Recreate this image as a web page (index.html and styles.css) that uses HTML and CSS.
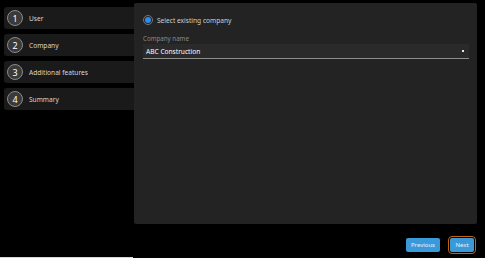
FILE: index.html
```html
<!DOCTYPE html>
<html lang="en">
<head>
    <meta charset="UTF-8">
    <meta name="viewport" content="width=device-width, initial-scale=1.0">
    <title>New account</title>
    <link rel="stylesheet" href="styles.css">
</head>
<body>
    <div class="page">
        <div class="main">
            <ul class="steps">
                <li class="step"><span class="step-num">1</span><span>User</span></li>
                <li class="step"><span class="step-num">2</span><span>Company</span></li>
                <li class="step"><span class="step-num">3</span><span>Additional features</span></li>
                <li class="step"><span class="step-num">4</span><span>Summary</span></li>
            </ul>

            <div class="panel">
                <label class="radio-row">
                    <span class="radio"><span class="radio-dot"></span></span>
                    Select existing company
                </label>

                <div class="field">
                    <div class="field-label">Company name</div>
                    <div class="select">
                        <span>ABC Construction</span>
                        <span class="select-arrow"></span>
                    </div>
                </div>
            </div>
        </div>

        <div class="actions">
            <button class="btn">Previous</button>
            <button class="btn btn-focus">Next</button>
        </div>

        <div class="bottom-line"></div>
    </div>
</body>
</html>
```

FILE: styles.css
```css
body {
    margin: 0;
    background-color: #000;
    font-family: 'Noto Sans', sans-serif;
    color: #ddd;
}

.page {
    width: 485px;
    height: 258px;
    overflow: hidden;
}

.main {
    display: flex;
    padding: 3px 0 0 4px;
}

.steps {
    list-style: none;
    margin: 0;
    padding: 4px 0 0 0;
    width: 130px;
    display: flex;
    flex-direction: column;
    gap: 5px;
}

.step {
    height: 22px;
    display: flex;
    align-items: center;
    gap: 6px;
    padding-left: 3px;
    background-color: #1a1a1a;
    border-radius: 3px 0 0 3px;
    font-size: 6.6px;
    color: #d8d8d8;
}

.step-num {
    width: 14px;
    height: 14px;
    border: 1px solid #8a8a8a;
    border-radius: 50%;
    background-color: #3a3a3a;
    color: #fff;
    font-size: 9px;
    display: flex;
    align-items: center;
    justify-content: center;
}

.panel {
    width: 343px;
    height: 221px;
    box-sizing: border-box;
    padding: 12px 8px 0 9px;
    background-color: #232323;
    border-radius: 2px;
}

.radio-row {
    display: flex;
    align-items: center;
    gap: 4px;
    font-size: 6.6px;
    color: #cfcfcf;
}

.radio {
    width: 8px;
    height: 8px;
    border: 1px solid #777;
    border-radius: 50%;
    display: flex;
    align-items: center;
    justify-content: center;
}

.radio-dot {
    width: 6px;
    height: 6px;
    border-radius: 50%;
    background-color: #2d8cf0;
}

.field {
    margin-top: 10px;
}

.field-label {
    font-size: 6.2px;
    color: #8a8a8a;
    line-height: 8px;
    margin-bottom: 1px;
}

.select {
    height: 14px;
    display: flex;
    align-items: center;
    justify-content: space-between;
    padding: 0 5px 0 3px;
    background-color: #2a2a2a;
    border-bottom: 1px solid #8c8c8c;
    font-size: 6.6px;
    color: #fff;
}

.select-arrow {
    width: 2px;
    height: 2px;
    background-color: #e8e8e8;
}

.actions {
    display: flex;
    justify-content: flex-end;
    align-items: center;
    gap: 10px;
    margin-top: 14px;
    padding-right: 11px;
}

.btn {
    height: 14px;
    padding: 0 5px;
    border: none;
    border-radius: 2px;
    background-color: #3a9ad9;
    color: #e6f1fa;
    font-family: 'Noto Sans', sans-serif;
    font-size: 6px;
}

.btn-focus {
    width: 24px;
    outline: 1px solid #c2620e;
    outline-offset: 1px;
}

.bottom-line {
    width: 133px;
    height: 1px;
    margin-top: 5px;
    background-color: #d8d8d8;
}
```
